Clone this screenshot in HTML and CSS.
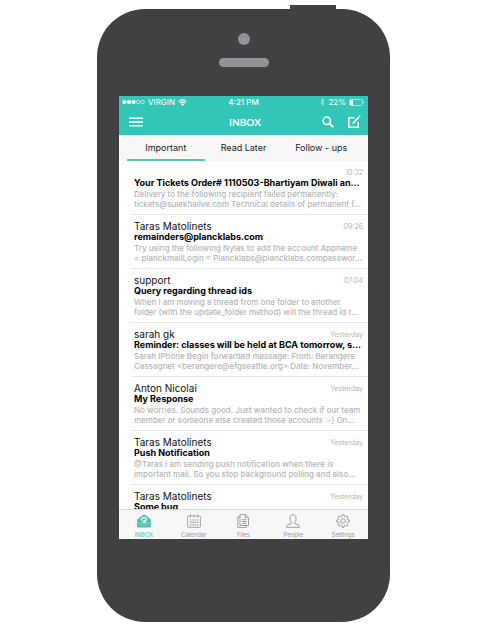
FILE: index.html
```
<!DOCTYPE html>
<html lang="en">
<head>
<meta charset="utf-8">
<meta name="viewport" content="width=device-width, initial-scale=1">
<title>Inbox</title>
<link rel="stylesheet" href="styles.css">
</head>
<body>
<div class="phone">
  <div class="hardware">
    <span class="camera"></span>
    <span class="speaker"></span>
  </div>
  <div class="screen">
    <header class="top">
      <div class="status">
        <div class="carrier">
          <svg width="23" height="6" viewBox="0 0 23 6" fill="#fff"><circle cx="2.4" cy="3" r="2.1"/><circle cx="7" cy="3" r="2.1"/><circle cx="11.6" cy="3" r="2.1"/><g fill="none" stroke="#fff" stroke-width=".6"><circle cx="16.1" cy="3" r="1.8"/><circle cx="20.6" cy="3" r="1.8"/></g></svg>
          <span>VIRGIN</span>
          <svg width="9" height="7" viewBox="0 0 9 7" fill="none" stroke="#fff" stroke-width="1.2"><path d="M.6 2.6Q4.500-.7 8.400 2.600M2 4.200Q4.500 2.100 7 4.200"/><path d="M3 5.200Q4.500 4 6 5.200L4.500 6.900z" fill="#fff" stroke="none"/></svg>
        </div>
        <span class="clock">4:21 PM</span>
        <div class="power">
          <svg width="5" height="8" viewBox="0 0 5 8" fill="none" stroke="#b5ebe4" stroke-width=".8"><path d="M.5 2.200 4.200 5.700 2.500 7.300V.7L4.200 2.300.5 5.800"/></svg>
          <span>22%</span>
          <svg width="16" height="7" viewBox="0 0 16 7"><rect x=".5" y=".5" width="13" height="6" rx="1" fill="none" stroke="#c4efe9" stroke-width=".8"/><path d="M1 1h3v5H1z" fill="#fff"/><path d="M14.500 2.200q1.500 1.300 0 2.600z" fill="#fff"/></svg>
        </div>
      </div>
      <div class="nav">
        <div class="side">
          <button class="icon" aria-label="Menu"><svg width="14" height="10" viewBox="0 0 14 10" stroke="#fff" stroke-width="1.6"><path d="M0 1.300h14M0 5h14M0 8.700h14"/></svg></button>
        </div>
        <h1>INBOX</h1>
        <div class="side end">
          <button class="icon" aria-label="Search"><svg width="12" height="12" viewBox="0 0 12 12" fill="none" stroke="#fff"><circle cx="4.800" cy="4.800" r="3.700" stroke-width="1.500"/><path d="m7.600 7.600 3.600 3.600" stroke-width="1.900"/></svg></button>
          <button class="icon" aria-label="Compose"><svg width="14" height="14" viewBox="0 0 14 14" fill="none" stroke="#fff"><path d="M7.500 2.800H1.800v9.400h9.400V7" stroke-width="1.600"/><path d="m5.300 8.900.6-2L11 1.800l1.300 1.300-5.200 5.200z" fill="#fff" stroke="none"/><path d="m11.500 1.300 1.300 1.300.9-1-1.200-1.200z" fill="#fff" stroke="none"/></svg></button>
        </div>
      </div>
    </header>
    <nav class="tabs">
      <a class="on" href="#">Important</a>
      <a href="#">Read Later</a>
      <a href="#">Follow - ups</a>
    </nav>
    <main class="list">
      <article class="mail">
        <div class="line"><h2></h2><time>10:32</time></div>
        <h3>Your Tickets Order# 1110503-Bhartiyam Diwali an...</h3>
        <p>Delivery to the following recipient failed permanently:<br>tickets@sulekhalive.com Technical details of permanent f...</p>
      </article>
      <article class="mail">
        <div class="line"><h2>Taras Matolinets</h2><time>09:26</time></div>
        <h3>remainders@plancklabs.com</h3>
        <p>Try using the following Nylas to add the account Appname<br>= planckmailLogin = Plancklabs@plancklabs.compasswor...</p>
      </article>
      <article class="mail">
        <div class="line"><h2>support</h2><time>07:04</time></div>
        <h3>Query regarding thread ids</h3>
        <p>When I am moving a thread from one folder to another<br>folder (with the update_folder method) will the thread id r...</p>
      </article>
      <article class="mail">
        <div class="line"><h2>sarah gk</h2><time>Yesterday</time></div>
        <h3>Reminder: classes will be held at BCA tomorrow, s...</h3>
        <p>Sarah IPhone Begin forwarded message: From: Berangere<br>Cassagnet &lt;berangere@efgseattle.org&gt; Date: November...</p>
      </article>
      <article class="mail">
        <div class="line"><h2>Anton Nicolai</h2><time>Yesterday</time></div>
        <h3>My Response</h3>
        <p>No worries. Sounds good. Just wanted to check if our team<br>member or someone else created those accounts :-) On...</p>
      </article>
      <article class="mail">
        <div class="line"><h2>Taras Matolinets</h2><time>Yesterday</time></div>
        <h3>Push Notification</h3>
        <p>@Taras I am sending push notification when there is<br>important mail. So you stop background polling and also...</p>
      </article>
      <article class="mail">
        <div class="line"><h2>Taras Matolinets</h2><time>Yesterday</time></div>
        <h3>Some bug</h3>
      </article>
    </main>
    <nav class="dock">
      <a class="on" href="#"><svg width="14" height="14" viewBox="0 0 14 14"><path d="M0 5.500 7 .3l7 5.200v7q0 1-1 1H1q-1 0-1-1z" fill="#4fc5b2"/><path d="M.5 8 7 12 13.500 8" fill="none" stroke="#a5e0d6" stroke-width=".6"/><path d="M4.600 6.400C3.600 3.300 8.900 2.600 9.300 5.300 9.500 7.200 6.700 7.500 6.700 5.900M5 7.900q2.100 1.700 4.300 0" fill="none" stroke="#fff" stroke-width="1.200"/></svg>INBOX</a>
      <a href="#"><svg width="14" height="14" viewBox="0 0 14 14" fill="none" stroke="#9b9b9b" stroke-width=".9"><rect x=".6" y="2" width="12.800" height="11.300" rx="1"/><path d="M3.500.4v3M7 .4v3M10.500.4v3"/><path d="M3 6h1.500M5.300 6h1.500M7.600 6h1.500M9.900 6h1.500M3 8.400h1.500M5.300 8.400h1.500M7.600 8.400h1.500M9.900 8.400h1.500M3 10.800h1.500M5.300 10.800h1.500M7.600 10.800h1.500M9.900 10.800h1.500" stroke-width="1.200"/></svg>Calendar</a>
      <a href="#"><svg width="14" height="14" viewBox="0 0 14 14" fill="none" stroke="#949494" stroke-width=".9"><path d="M4 .7h5.500L12.500 3.700v7.800H4z"/><path d="M9.300.8v3.100h3M4 2.800H1.800v10.600h8.500v-1.900M6 5.700h4.500M6 7.500h4.500M6 9.300h4.500"/></svg>Files</a>
      <a href="#"><svg width="14" height="14" viewBox="0 0 14 14" fill="none" stroke="#949494" stroke-width=".9"><path d="M5.400 8.300C3.500 6.700 3 .6 7 .6s3.500 6.100 1.600 7.700v1.200l3.800 1.300q.9.500.9 2.500H.7q0-2 .9-2.500l3.800-1.300z"/></svg>People</a>
      <a href="#"><svg width="14" height="14" viewBox="0 0 14 14" fill="none" stroke="#949494" stroke-width=".9"><circle cx="7" cy="7" r="2.300"/><path d="M5.800 2.200 6.100.6h1.800l.3 1.600 1.300.6 1.400-1 1.300 1.300-1 1.400.6 1.300 1.600.3v1.800l-1.600.3-.6 1.300 1 1.400-1.300 1.300-1.400-1-1.300.6-.3 1.600H6.100l-.3-1.600-1.300-.6-1.400 1-1.300-1.300 1-1.400-.6-1.300-1.600-.3V6.100l1.600-.3.6-1.300-1-1.400 1.300-1.300 1.400 1z" stroke-linejoin="round"/></svg>Settings</a>
    </nav>
  </div>
</div>
</body>
</html>
```
FILE: styles.css
```
* {
  box-sizing: border-box;
}

body {
  display: flex;
  height: 100vh;
  margin: 0;
  padding: 9px 110px 10px 97px;
  background: #fff;
  font-family: Inter, "Liberation Sans", sans-serif;
}

h1, h2, h3, p {
  margin: 0;
}

a {
  color: inherit;
  text-decoration: none;
}

svg {
  display: block;
  flex: none;
}

.phone {
  position: relative;
  display: flex;
  flex: 1;
  flex-direction: column;
  min-width: 0;
  padding: 0 22px 83px;
  border-radius: 48px;
  background: #414042;
}

.phone::before {
  content: "";
  position: absolute;
  top: -4px;
  right: 54px;
  width: 46px;
  height: 5px;
  background: #414042;
}

.hardware {
  display: flex;
  flex: none;
  flex-direction: column;
  align-items: center;
  gap: 13px;
  height: 87px;
  padding-top: 24px;
}

.camera {
  width: 12px;
  height: 12px;
  border-radius: 50%;
  background: #939297;
}

.speaker {
  width: 50px;
  height: 9px;
  border-radius: 5px;
  background: #939297;
}

.screen {
  display: flex;
  flex: 1;
  flex-direction: column;
  min-height: 0;
  background: #fff;
}

.top {
  flex: none;
  background: #33c6b6;
  color: #fff;
}

.status {
  display: grid;
  grid-template-columns: 1fr auto 1fr;
  align-items: center;
  height: 12px;
  padding: 0 3px;
  font-size: 8px;
  line-height: 12px;
}

.carrier, .power {
  display: flex;
  align-items: center;
  gap: 3px;
}

.power {
  justify-content: flex-end;
}

.clock {
  font-weight: 500;
}

.nav {
  display: grid;
  grid-template-columns: 1fr auto 1fr;
  align-items: center;
  height: 27px;
  padding: 0 7px 0 10px;
}

.nav h1 {
  font: bold 10px/14px Lato, sans-serif;
}

.side {
  display: flex;
  align-items: center;
}

.side.end {
  justify-content: flex-end;
  gap: 13px;
}

.icon {
  padding: 0;
  border: 0;
  background: none;
}

.tabs {
  display: flex;
  flex: none;
  padding: 0 8px;
  background: #f7f7f7;
}

.tabs a {
  flex: 1;
  height: 26px;
  border-bottom: 2px solid transparent;
  color: #222;
  font-size: 9px;
  line-height: 26px;
  text-align: center;
}

.tabs .on {
  border-color: #58c5b0;
}

.list {
  flex: 1;
  min-height: 0;
  overflow: hidden;
}

.mail {
  height: 54px;
  margin-left: 12px;
  padding: 6px 0 0 3px;
  border-bottom: 1px solid #e6e6e6;
  white-space: nowrap;
}

.line {
  display: flex;
  justify-content: space-between;
  height: 11px;
  padding-right: 5px;
}

.mail h2 {
  color: #111;
  font-size: 10px;
  font-weight: 400;
  line-height: 11px;
}

.mail time {
  color: #b5b5b5;
  font-size: 7px;
  line-height: 11px;
}

.mail h3 {
  color: #000;
  font-size: 9px;
  font-weight: 700;
  line-height: 10px;
}

.mail p {
  padding-top: 1px;
  color: #b5b5b5;
  font-size: 8px;
  font-weight: 500;
  line-height: 10px;
}

.dock {
  display: flex;
  flex: none;
  height: 30px;
  border-top: 1px solid #dcdcdc;
  background: #f7f7f7;
  color: #999;
}

.dock a {
  display: flex;
  flex: 1;
  flex-direction: column;
  align-items: center;
  gap: 3px;
  padding-top: 4px;
  font-size: 6px;
  line-height: 8px;
}

.dock .on {
  color: #4fc5b2;
}
```
